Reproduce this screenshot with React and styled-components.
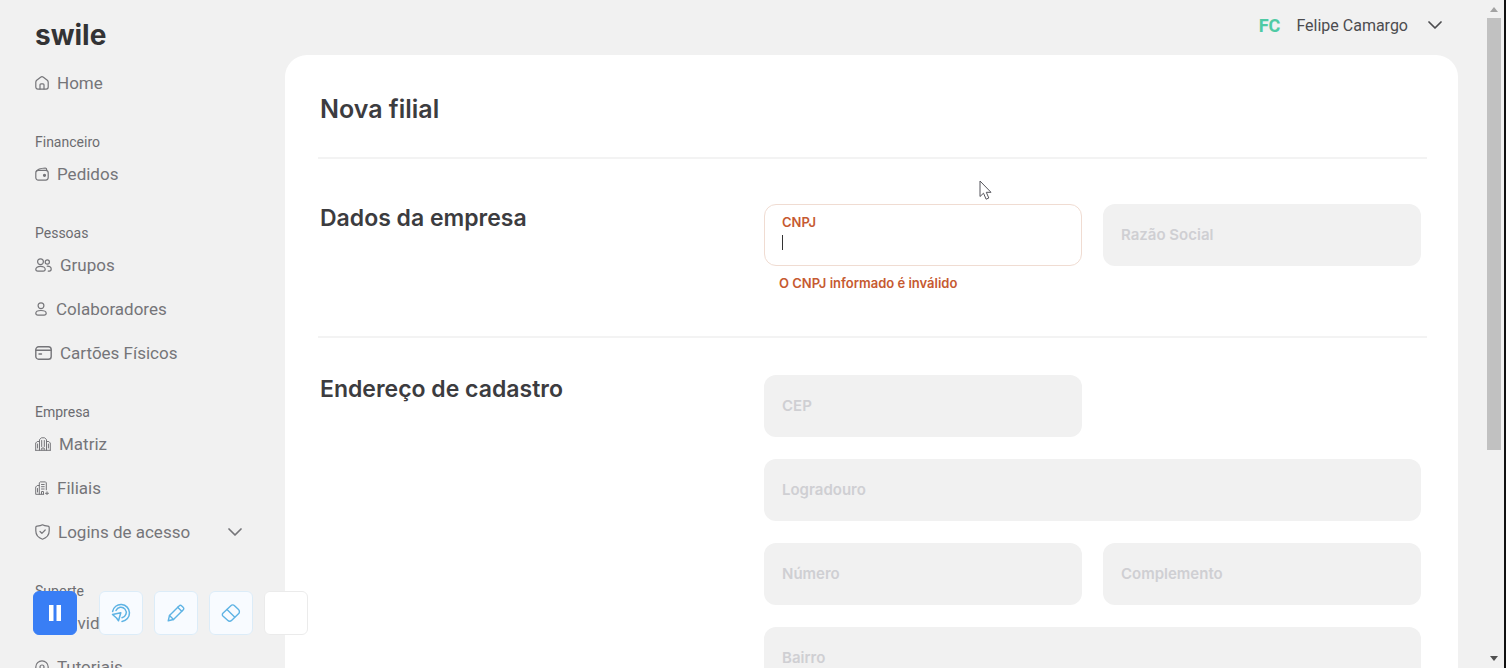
import React from "react";
import { useState } from "react";
import styled, { createGlobalStyle, css } from "styled-components";

const GlobalStyle = createGlobalStyle`
  * {
    box-sizing: border-box;
  }

  body {
    margin: 0;
    background: #f1f1f1;
    font-family: Roboto, "Liberation Sans", sans-serif;
    color: #3c3c3f;
  }
`;

const Page = styled.div`
  display: flex;
  height: 100vh;
  overflow: hidden;
  background: #f1f1f1;
`;

const Sidebar = styled.aside`
  flex: 0 0 285px;
  padding: 16px 43px 0 35px;
`;

const Logo = styled.a`
  display: block;
  height: 45px;
  font-family: Inter, sans-serif;
  font-size: 28px;
  font-weight: 700;
  line-height: 38px;
  color: #333335;
  text-decoration: none;
`;

const NavGroup = styled.div`
  margin-bottom: 27px;
`;

const NavTitle = styled.div`
  font-size: 14px;
  line-height: 20px;
  color: #6c6c70;
`;

const NavItem = styled.a`
  display: flex;
  align-items: center;
  height: 44px;
  font-size: 17px;
  color: #757579;
  text-decoration: none;
  white-space: nowrap;

  svg {
    flex: none;
    margin-right: 8px;
  }
`;

const NavArrow = styled.span`
  display: flex;
  margin-left: auto;

  svg {
    margin-right: 0;
  }
`;

const Main = styled.main`
  flex: 1;
  min-width: 0;
  display: flex;
  flex-direction: column;
`;

const TopBar = styled.header`
  display: flex;
  justify-content: flex-end;
  flex: 0 0 55px;
  padding: 9px 16px 0 0;
`;

const UserButton = styled.button`
  display: flex;
  align-items: center;
  gap: 16px;
  height: 32px;
  padding: 0;
  border: none;
  background: none;
  font-family: inherit;
  font-size: 16px;
  color: #4c4c4f;
  cursor: pointer;

  svg {
    margin-left: 4px;
  }
`;

const Initials = styled.span`
  font-size: 18px;
  font-weight: 700;
  color: #4fcaa4;
`;

const Panel = styled.div`
  flex: 1;
  padding: 37px 31px 0 33px;
  border-radius: 22px 22px 0 0;
  background: #fff;
`;

const PageTitle = styled.h1`
  margin: 0;
  padding: 0 2px 30px;
  border-bottom: 2px solid #f3f3f3;
  font-family: Inter, sans-serif;
  font-size: 25px;
  font-weight: 600;
  line-height: 35px;
`;

const Section = styled.section`
  display: grid;
  grid-template-columns: 444px minmax(0, 1fr);
  padding: ${(props) => (props.$first ? "45px 6px 43px 2px" : "37px 6px 40px 2px")};
  border-bottom: 2px solid #f3f3f3;
`;

const SectionTitle = styled.h2`
  margin: 0;
  font-family: Inter, sans-serif;
  font-size: 23px;
  font-weight: 600;
  line-height: 29px;
`;

const Fields = styled.div`
  display: grid;
  grid-template-columns: 1fr 1fr;
  gap: 22px 21px;
`;

const FieldCell = styled.div`
  grid-column: ${(props) => (props.$wide ? "1 / -1" : props.$alone ? "1" : "auto")};
`;

const FieldBox = styled.div`
  position: relative;
  display: flex;
  flex-direction: column;
  justify-content: center;
  height: 62px;
  padding: 0 18px;
  border-radius: 12px;
  background: #f1f1f1;

  ${(props) =>
    props.$error &&
    css`
      justify-content: flex-start;
      padding: 8px 17px;
      border: 1px solid #f0dcd2;
      background: #fff;
    `}
`;

const FieldLabel = styled.label`
  font-family: Inter, sans-serif;
  font-size: ${(props) => (props.$error ? "13px" : "15px")};
  font-weight: 600;
  line-height: 18px;
  color: ${(props) => (props.$error ? "#c65a31" : "#cfcfd3")};
`;

const FieldInput = styled.input`
  width: 100%;
  height: 22px;
  padding: 0;
  border: none;
  background: transparent;
  font-family: inherit;
  font-size: 15px;
  outline: none;
  caret-color: transparent;

  &:disabled {
    position: absolute;
    inset: 0;
    height: 100%;
    padding: 0 18px;
  }
`;

const Caret = styled.span`
  position: absolute;
  left: 17px;
  top: 30px;
  width: 1px;
  height: 15px;
  background: #333;
`;

const ErrorText = styled.p`
  margin: 7px 0 0 15px;
  font-family: Inter, sans-serif;
  font-size: 13px;
  font-weight: 600;
  line-height: 20px;
  color: #c65a31;
`;

const ScrollTrack = styled.div`
  flex: 0 0 20px;
  display: flex;
  flex-direction: column;
  align-items: center;
  justify-content: space-between;
  margin-left: 28px;
  padding: 7px 2px 7px 0;
  border-right: 2px solid #111;
`;

const ScrollThumb = styled.div`
  width: 14px;
  height: 66%;
  margin: 6px 0 auto;
  background: #c1c1c1;
`;

const Arrow = styled.div`
  border: 4px solid transparent;
  border-top-width: ${(props) => (props.$down ? "5px" : "0")};
  border-bottom-width: ${(props) => (props.$down ? "0" : "5px")};
  border-top-color: #505050;
  border-bottom-color: #a3a3a3;
`;

const Recorder = styled.div`
  position: fixed;
  left: 33px;
  bottom: 33px;
  display: flex;
  gap: 11px;
`;

const ToolButton = styled.button`
  display: flex;
  align-items: center;
  justify-content: center;
  width: 44px;
  height: 44px;
  padding: 0;
  border: 1px solid ${(props) => (props.$empty ? "#ebebeb" : "#dcecf8")};
  border-radius: 6px;
  background: ${(props) => (props.$empty ? "#fff" : "#f8fbff")};
  color: #5eb3e4;
  cursor: pointer;

  ${(props) =>
    props.$primary &&
    css`
      margin-right: 11px;
      border-color: #397ef5;
      background: #397ef5;
      color: #fff;
    `}
`;

const Pointer = styled.svg`
  position: fixed;
  left: 979px;
  top: 180px;
  pointer-events: none;
`;

function Icon({ width = 14, height = 14, strokeWidth = 1.2, children }) {
  return (
    <svg
      width={width}
      height={height}
      viewBox={`0 0 ${width} ${height}`}
      fill="none"
      stroke="currentColor"
      strokeWidth={strokeWidth}
      strokeLinecap="round"
      strokeLinejoin="round"
      aria-hidden="true"
    >
      {children}
    </svg>
  );
}

const Chevron = () => (
  <Icon width={14} height={8} strokeWidth={1.7}>
    <path d="M1 1l6 6 6-6" />
  </Icon>
);

const icons = {
  home: (
    <Icon>
      <path d="M.8 6.2c0-.8.3-1.4.9-1.9L5.6 1.2a2.2 2.2 0 0 1 2.8 0l3.9 3.1c.6.5.9 1.1.9 1.9v4.9a2 2 0 0 1-2 2H2.8a2 2 0 0 1-2-2z" />
      <path d="M5 13V8.8a1 1 0 0 1 1-1h2a1 1 0 0 1 1 1V13" />
    </Icon>
  ),
  wallet: (
    <Icon>
      <path d="M1.3 4.2C2.6 1.9 5 1.3 10.2 1c.9 0 1.4.5 1.4 1.3v1" />
      <rect x=".8" y="3.3" width="12.4" height="9.8" rx="2.5" />
      <circle cx="9.5" cy="8.3" r="1" fill="currentColor" />
    </Icon>
  ),
  group: (
    <Icon width={17}>
      <circle cx="5.5" cy="3.7" r="2.9" />
      <path d="M5.5 8.3c-3 0-4.7 1.4-4.7 3 0 1.2.7 1.8 2 1.8h5.4c1.3 0 2-.6 2-1.8 0-1.6-1.7-3-4.7-3z" />
      <circle cx="12.3" cy="4" r="2.1" />
      <path d="M12.2 8.2c2.4 0 4 1.3 4 2.9 0 1.3-.7 2-1.8 2h-1.2" />
    </Icon>
  ),
  user: (
    <Icon width={13}>
      <circle cx="6" cy="3.7" r="2.9" />
      <path d="M6 8.5c-3.2 0-5.2 1.2-5.2 2.8 0 1.2.8 1.8 2.2 1.8h6c1.4 0 2.2-.6 2.2-1.8 0-1.6-2-2.8-5.2-2.8z" />
    </Icon>
  ),
  card: (
    <Icon width={17} strokeWidth={1.4}>
      <rect x=".8" y=".8" width="15.4" height="12.4" rx="2.8" />
      <path d="M1 4.3h15M4 8h2.5" />
    </Icon>
  ),
  building: (
    <Icon width={16} strokeWidth={1}>
      <path d="M4.5 13.3V2.5L6.5.8h3l2 1.7v10.8M4.5 4.5H2.2L.7 6v7.3M11.5 4.5h2.3L15.3 6v7.3M.7 13.3h14.6" />
      <path d="M6.7 3.5v6M9.3 3.5v6M2.6 7v4M13.4 7v4M6.8 13v-2h2.4v2" />
    </Icon>
  ),
  branch: (
    <Icon strokeWidth={1}>
      <path d="M4.3 13.3V1.8l1-.9h5.2l.8.9v7M4.3 4.5H2.2L.7 6v7.3h8" />
      <path d="M6.5 3.5h2.7M6.5 5.7h2.7M6.5 8h2.7M2.5 7.5V11M6.5 13v-2.5h2V13" />
      <path d="M10.5 12.3h3M12 10.8v3" />
    </Icon>
  ),
  shield: (
    <Icon width={15} height={16}>
      <path d="M7.5.8C9.3 1.8 11.2 2 13 2.2c.8.1 1.2.6 1.2 1.3v3.3c0 4.3-2.3 7-6.7 8.4C3.1 13.8.8 11.1.8 6.8V3.5c0-.7.4-1.2 1.2-1.3C3.8 2 5.7 1.8 7.5.8z" />
      <path d="M5 7.5l1.9 1.8 3.3-3.3" />
    </Icon>
  ),
  help: (
    <Icon>
      <circle cx="7" cy="7" r="6.2" />
      <circle cx="7" cy="7" r="2" />
    </Icon>
  ),
};

const menu = [
  { items: [{ icon: "home", label: "Home" }] },
  { title: "Financeiro", items: [{ icon: "wallet", label: "Pedidos" }] },
  {
    title: "Pessoas",
    items: [
      { icon: "group", label: "Grupos" },
      { icon: "user", label: "Colaboradores" },
      { icon: "card", label: "Cartões Físicos" },
    ],
  },
  {
    title: "Empresa",
    items: [
      { icon: "building", label: "Matriz" },
      { icon: "branch", label: "Filiais" },
      { icon: "shield", label: "Logins de acesso", arrow: true },
    ],
  },
  {
    title: "Suporte",
    items: [
      { icon: "help", label: "Dúvidas" },
      { icon: "help", label: "Tutoriais" },
    ],
  },
];

function DisabledField({ id, label, wide, alone }) {
  return (
    <FieldCell $wide={wide} $alone={alone}>
      <FieldBox>
        <FieldLabel htmlFor={id}>{label}</FieldLabel>
        <FieldInput id={id} type="text" disabled />
      </FieldBox>
    </FieldCell>
  );
}

function App() {
  const [cnpj, setCnpj] = useState("");

  return (
    <>
      <GlobalStyle />
      <Page>
        <Sidebar>
          <Logo href="#">swile</Logo>
          <nav>
            {menu.map((group) => (
              <NavGroup key={group.title || "home"}>
                {group.title && <NavTitle>{group.title}</NavTitle>}
                {group.items.map((item) => (
                  <NavItem href="#" key={item.label}>
                    {icons[item.icon]}
                    {item.label}
                    {item.arrow && (
                      <NavArrow>
                        <Chevron />
                      </NavArrow>
                    )}
                  </NavItem>
                ))}
              </NavGroup>
            ))}
          </nav>
        </Sidebar>

        <Main>
          <TopBar>
            <UserButton type="button">
              <Initials>FC</Initials>
              Felipe Camargo
              <Chevron />
            </UserButton>
          </TopBar>

          <Panel>
            <PageTitle>Nova filial</PageTitle>

            <Section $first>
              <SectionTitle>Dados da empresa</SectionTitle>
              <Fields>
                <FieldCell>
                  <FieldBox $error>
                    <FieldLabel htmlFor="cnpj" $error>CNPJ</FieldLabel>
                    <FieldInput
                      id="cnpj"
                      type="text"
                      value={cnpj}
                      onChange={(e) => setCnpj(e.target.value)}
                    />
                    {!cnpj && <Caret />}
                  </FieldBox>
                  <ErrorText>O CNPJ informado é inválido</ErrorText>
                </FieldCell>
                <DisabledField id="razao" label="Razão Social" />
              </Fields>
            </Section>

            <Section>
              <SectionTitle>Endereço de cadastro</SectionTitle>
              <Fields>
                <DisabledField id="cep" label="CEP" alone />
                <DisabledField id="logradouro" label="Logradouro" wide />
                <DisabledField id="numero" label="Número" />
                <DisabledField id="complemento" label="Complemento" />
                <DisabledField id="bairro" label="Bairro" wide />
              </Fields>
            </Section>
          </Panel>
        </Main>

        <ScrollTrack aria-hidden="true">
          <Arrow />
          <ScrollThumb />
          <Arrow $down />
        </ScrollTrack>
      </Page>

      <Recorder>
        <ToolButton $primary type="button" aria-label="Pausar">
          <svg width="12" height="16" viewBox="0 0 12 16" fill="currentColor" aria-hidden="true">
            <path d="M0 0h4.5v16H0zM7.5 0H12v16H7.5z" />
          </svg>
        </ToolButton>
        <ToolButton type="button" aria-label="Destacar cliques">
          <Icon width={20} height={20} strokeWidth={1.5}>
            <path d="M1.6 8.500a8.5 8.5 0 1 1 9.4 9.9" />
            <path d="M5 7.5a5.3 5.3 0 1 1 6 7.2" />
            <path d="M1.5 11.5l8.3-1.8-2.3 8-2-2.7z" />
          </Icon>
        </ToolButton>
        <ToolButton type="button" aria-label="Desenhar">
          <Icon width={18} height={18} strokeWidth={1.4}>
            <path d="M1.2 16.8l1.3-5.3L12.3 1.7a1.5 1.5 0 0 1 2.2 0l1.8 1.8a1.5 1.5 0 0 1 0 2.2L6.5 15.5z" />
            <path d="M2.5 11.5l4 4M10.7 3.3l4 4" />
          </Icon>
        </ToolButton>
        <ToolButton type="button" aria-label="Apagar">
          <Icon width={20} height={18} strokeWidth={1.4}>
            <path d="M1.9 9.3l7.7-7.4a3 3 0 0 1 4.2 0l3.7 3.6a3 3 0 0 1 0 4.3l-6.7 6.4a3 3 0 0 1-4.2 0l-4.7-4.2a1.9 1.9 0 0 1 0-2.7z" />
            <path d="M6 5.6l7.6 7.5" />
          </Icon>
        </ToolButton>
        <ToolButton $empty type="button" aria-label="Mais opções" />
      </Recorder>

      <Pointer width="13" height="21" viewBox="0 0 13 21" aria-hidden="true">
        <path
          d="M1 1v15.5l3.5-3.3 2.6 6 2.7-1.2-2.5-5.7H12z"
          fill="#fff"
          stroke="#55555c"
          strokeLinejoin="round"
        />
      </Pointer>
    </>
  );
}

export default App;
